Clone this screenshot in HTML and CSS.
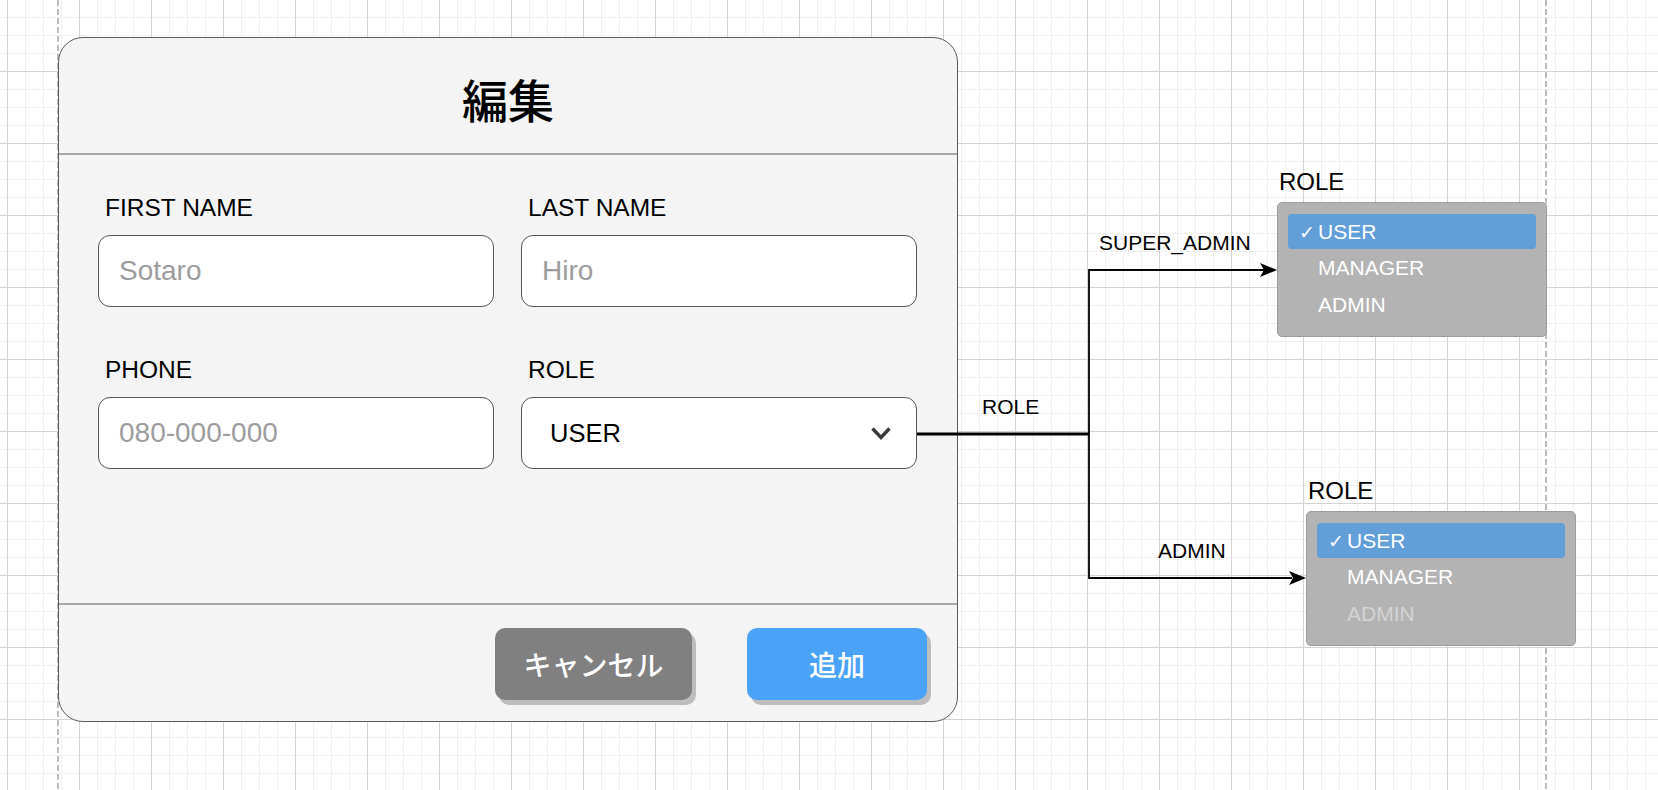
FILE: index.html
```html
<!DOCTYPE html>
<html lang="ja">
<head>
  <meta charset="UTF-8" />
  <title>編集 – User Role Dialog</title>
  <link rel="stylesheet" href="styles.css">
</head>
<body>

<div class="canvas">
  <!-- page guides -->
  <div class="guide guide-left"></div>
  <div class="guide guide-right"></div>

  <!-- edit dialog -->
  <div class="dialog">
    <div class="dialog-header">
      <h1>編集</h1>
    </div>

    <div class="dialog-body">
      <div class="field">
        <label for="firstName">FIRST NAME</label>
        <input type="text" id="firstName" placeholder="Sotaro" />
      </div>
      <div class="field">
        <label for="lastName">LAST NAME</label>
        <input type="text" id="lastName" placeholder="Hiro" />
      </div>
      <div class="field">
        <label for="phone">PHONE</label>
        <input type="text" id="phone" placeholder="080-000-000" />
      </div>
      <div class="field">
        <label for="role">ROLE</label>
        <div class="select" id="role">
          <span>USER</span>
          <svg class="chevron" width="22" height="15" viewBox="0 0 22 15">
            <polyline points="2.5,2.5 11,11.5 19.5,2.5" />
          </svg>
        </div>
      </div>
    </div>

    <div class="dialog-footer">
      <button class="btn btn-cancel">キャンセル</button>
      <button class="btn btn-add">追加</button>
    </div>
  </div>

  <!-- connectors from the role select -->
  <svg class="connectors" width="1658" height="790" viewBox="0 0 1658 790">
    <line class="trunk" x1="917" y1="434" x2="1089" y2="434" />
    <line x1="1089" y1="269" x2="1089" y2="579" />
    <line x1="1089" y1="270" x2="1264" y2="270" />
    <line x1="1089" y1="578" x2="1292" y2="578" />
    <polygon points="1260,263 1277,270 1260,277 1264,270" />
    <polygon points="1289,571 1306,578 1289,585 1293,578" />
  </svg>

  <span class="edge-label label-super">SUPER_ADMIN</span>
  <span class="edge-label label-role">ROLE</span>
  <span class="edge-label label-admin">ADMIN</span>

  <!-- role menu seen by SUPER_ADMIN -->
  <div class="menu-node menu-super">
    <div class="menu-title">ROLE</div>
    <ul class="menu">
      <li class="selected"><span class="check">✓</span>USER</li>
      <li><span class="check"></span>MANAGER</li>
      <li><span class="check"></span>ADMIN</li>
    </ul>
  </div>

  <!-- role menu seen by ADMIN -->
  <div class="menu-node menu-admin">
    <div class="menu-title">ROLE</div>
    <ul class="menu">
      <li class="selected"><span class="check">✓</span>USER</li>
      <li><span class="check"></span>MANAGER</li>
      <li class="disabled"><span class="check"></span>ADMIN</li>
    </ul>
  </div>
</div>

</body>
</html>
```

FILE: styles.css
```css
body {
  margin: 0;
  padding: 0;
  background-color: #ffffff;
  background-image:
    linear-gradient(to right, #d4d4d4 1px, transparent 1px),
    linear-gradient(to bottom, #d4d4d4 1px, transparent 1px),
    linear-gradient(to right, #f0f0f0 1px, transparent 1px),
    linear-gradient(to bottom, #f0f0f0 1px, transparent 1px);
  background-size: 72px 72px, 72px 72px, 18px 18px, 18px 18px;
  background-position: 7px 0, 0 71px, 7px 0, 0 17px;
  font-family: 'Liberation Sans', 'Noto Sans CJK JP', sans-serif;
  color: #000000;
}
.canvas {
  position: relative;
  width: 1658px;
  height: 790px;
  overflow: hidden;
}

/* dashed page guides */
.guide {
  position: absolute;
  top: 0;
  bottom: 0;
  width: 2px;
  background: repeating-linear-gradient(to bottom, #bcbcbc 0 6px, transparent 6px 9px);
}
.guide-left {
  left: 57px;
}
.guide-right {
  left: 1545px;
}

/* dialog */
.dialog {
  position: absolute;
  left: 58px;
  top: 37px;
  width: 900px;
  height: 685px;
  box-sizing: border-box;
  border: 1px solid #5a5a5a;
  border-radius: 25px;
  background-color: #f4f4f4;
  display: flex;
  flex-direction: column;
}
.dialog-header {
  height: 117px;
  box-sizing: border-box;
  border-bottom: 2px solid #a8a8a8;
  display: flex;
  align-items: center;
  justify-content: center;
}
.dialog-header h1 {
  margin: 0;
  padding-top: 4px;
  font-family: 'Noto Sans CJK JP', sans-serif;
  font-size: 46px;
  font-weight: 500;
  line-height: 1;
}
.dialog-body {
  flex: 1;
  display: grid;
  grid-template-columns: 396px 396px;
  column-gap: 27px;
  row-gap: 48px;
  align-content: start;
  padding: 38px 40px 0 39px;
}
.field label {
  display: block;
  margin: 0 0 12px 7px;
  font-size: 24.5px;
  line-height: 30px;
}
.field input,
.select {
  display: block;
  width: 100%;
  height: 72px;
  box-sizing: border-box;
  border: 1px solid #555555;
  border-radius: 12px;
  background-color: #ffffff;
  font-family: 'Liberation Sans', sans-serif;
  outline: none;
}
.field input {
  padding: 0 20px;
  font-size: 28px;
  color: #000000;
}
.field input::placeholder {
  color: #9c9c9c;
}
.select {
  display: flex;
  align-items: center;
  justify-content: space-between;
  padding: 0 24px 0 28px;
  font-size: 25.5px;
}
.chevron polyline {
  fill: none;
  stroke: #3a3a3a;
  stroke-width: 3.4;
}
.dialog-footer {
  height: 118px;
  box-sizing: border-box;
  border-top: 2px solid #a8a8a8;
  display: flex;
  justify-content: flex-end;
  align-items: flex-start;
  gap: 55px;
  padding: 23px 30px 0 0;
}
.btn {
  height: 72px;
  border: none;
  border-radius: 10px;
  box-shadow: 4px 5px 0 #bdbdbd;
  color: #ffffff;
  font-family: 'Noto Sans CJK JP', sans-serif;
  font-size: 28px;
  font-weight: 500;
  cursor: pointer;
}
.btn-cancel {
  width: 197px;
  background-color: #808080;
}
.btn-add {
  width: 180px;
  background-color: #4aa3f8;
}

/* connectors */
.connectors {
  position: absolute;
  left: 0;
  top: 0;
  pointer-events: none;
}
.connectors line {
  stroke: #000000;
  stroke-width: 1.8;
}
.connectors .trunk {
  stroke-width: 2.8;
}
.connectors polygon {
  fill: #000000;
}
.edge-label {
  position: absolute;
  font-size: 21px;
  line-height: 24px;
  white-space: nowrap;
}
.label-super {
  left: 1099px;
  top: 231px;
}
.label-role {
  left: 982px;
  top: 395px;
}
.label-admin {
  left: 1158px;
  top: 539px;
}

/* role menus */
.menu-node {
  position: absolute;
  width: 270px;
}
.menu-super {
  left: 1277px;
  top: 168px;
}
.menu-admin {
  left: 1306px;
  top: 477px;
}
.menu-title {
  margin: 0 0 6px 2px;
  font-size: 24px;
  line-height: 28px;
}
.menu {
  list-style: none;
  margin: 0;
  height: 135px;
  box-sizing: border-box;
  padding: 11px 10px 0 10px;
  border: 1px solid #9c9c9c;
  border-radius: 5px;
  background-color: #b3b3b3;
  display: flex;
  flex-direction: column;
  gap: 1.5px;
}
.menu li {
  display: flex;
  align-items: center;
  height: 35px;
  padding-left: 11px;
  border-radius: 4px;
  font-size: 21px;
  color: #ffffff;
}
.menu li.selected {
  background-color: #629ed7;
}
.menu li.disabled {
  color: #d4d4d4;
}
.check {
  display: inline-block;
  width: 19px;
  font-family: 'DejaVu Sans', sans-serif;
  font-size: 19px;
  font-weight: bold;
}
```
